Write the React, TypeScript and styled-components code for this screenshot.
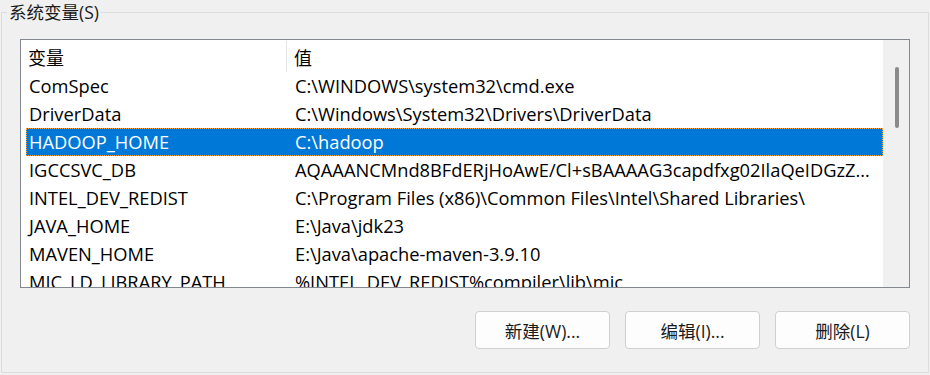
import React from 'react';
import styled, { createGlobalStyle } from 'styled-components';

const GlobalStyle = createGlobalStyle`
    html, body {
        margin: 0;
        padding: 0;
        background: #f0f0f0;
    }
    body {
        font-family: 'Open Sans', 'Noto Sans CJK SC', sans-serif;
        color: #000;
    }
`;

const GroupBox = styled.fieldset`
    box-sizing: border-box;
    width: 928px;
    height: 373px;
    margin: 0 0 0 1px;
    padding: 15px 18px 0 18px;
    border: 1px solid #dcdcdc;
    border-radius: 0;
    display: flex;
    flex-direction: column;
`;

const Legend = styled.legend`
    font-size: 17.5px;
    line-height: 24px;
    padding: 0 2px;
    margin-left: -13px;
    color: #1a1a1a;
`;

const ListView = styled.div`
    box-sizing: border-box;
    height: 249px;
    border: 1px solid #828790;
    background: #fff;
    display: flex;
    overflow: hidden;
`;

const ListContent = styled.div`
    flex: 1;
    min-width: 0;
    display: flex;
    flex-direction: column;
    overflow: hidden;
`;

const HeaderRow = styled.div`
    display: grid;
    grid-template-columns: 266px 1fr;
    height: 32px;
    flex-shrink: 0;
`;

const HeaderCell = styled.div<{ $divider?: boolean }>`
    display: flex;
    align-items: center;
    padding-left: 7px;
    font-size: 18px;
    border-right: ${(p) => (p.$divider ? '1px solid #e5e5e5' : 'none')};
    margin: 1px 0 0 0;
`;

const Row = styled.div<{ $selected?: boolean }>`
    box-sizing: border-box;
    display: grid;
    grid-template-columns: 261px 1fr;
    height: 28px;
    flex-shrink: 0;
    margin-left: 5px;
    align-items: center;
    font-size: 18.3px;
    line-height: 26px;
    background: ${(p) => (p.$selected ? '#0078d7' : 'transparent')};
    color: ${(p) => (p.$selected ? '#fff' : '#000')};
    outline: ${(p) => (p.$selected ? '1px dotted #f7a23a' : 'none')};
    outline-offset: -1px;
`;

const Cell = styled.div<{ $pad: number }>`
    padding-left: ${(p) => p.$pad}px;
    padding-right: 4px;
    white-space: nowrap;
    overflow: hidden;
    text-overflow: ellipsis;
`;

const ScrollTrack = styled.div`
    width: 26px;
    flex-shrink: 0;
    background: #f0f0f0;
    padding-top: 27px;
    display: flex;
    justify-content: center;
`;

const ScrollThumb = styled.div`
    width: 4px;
    height: 61px;
    margin-left: 1px;
    border-radius: 2px;
    background: #8a8a8a;
`;

const ButtonBar = styled.div`
    display: flex;
    justify-content: flex-end;
    gap: 15px;
    margin-top: 23px;
`;

const Button = styled.button`
    box-sizing: border-box;
    width: 135px;
    height: 38px;
    background: #fdfdfd;
    border: 1px solid #d0d0d0;
    border-radius: 4px;
    font-family: 'Open Sans', 'Noto Sans CJK SC', sans-serif;
    font-size: 17.5px;
    color: #1a1a1a;
    padding: 0;
`;

const variables = [
    { name: 'ComSpec', value: 'C:\\WINDOWS\\system32\\cmd.exe' },
    { name: 'DriverData', value: 'C:\\Windows\\System32\\Drivers\\DriverData' },
    { name: 'HADOOP_HOME', value: 'C:\\hadoop', selected: true },
    { name: 'IGCCSVC_DB', value: 'AQAAANCMnd8BFdERjHoAwE/Cl+sBAAAAG3capdfxg02IlaQeIDGzZQAAAAACAAAAAAAQZgAAAAEAACAAAAD' },
    { name: 'INTEL_DEV_REDIST', value: 'C:\\Program Files (x86)\\Common Files\\Intel\\Shared Libraries\\' },
    { name: 'JAVA_HOME', value: 'E:\\Java\\jdk23' },
    { name: 'MAVEN_HOME', value: 'E:\\Java\\apache-maven-3.9.10' },
    { name: 'MIC_LD_LIBRARY_PATH', value: '%INTEL_DEV_REDIST%compiler\\lib\\mic' },
];

const App: React.FC = () => {
    return (
        <>
            <GlobalStyle />
            <GroupBox>
                <Legend>系统变量(S)</Legend>
                <ListView>
                    <ListContent>
                        <HeaderRow>
                            <HeaderCell $divider>变量</HeaderCell>
                            <HeaderCell>值</HeaderCell>
                        </HeaderRow>
                        {variables.map((v) => (
                            <Row key={v.name} $selected={v.selected}>
                                <Cell $pad={3}>{v.name}</Cell>
                                <Cell $pad={8}>{v.value}</Cell>
                            </Row>
                        ))}
                    </ListContent>
                    <ScrollTrack>
                        <ScrollThumb />
                    </ScrollTrack>
                </ListView>
                <ButtonBar>
                    <Button>新建(W)...</Button>
                    <Button>编辑(I)...</Button>
                    <Button>删除(L)</Button>
                </ButtonBar>
            </GroupBox>
        </>
    );
};

export default App;
